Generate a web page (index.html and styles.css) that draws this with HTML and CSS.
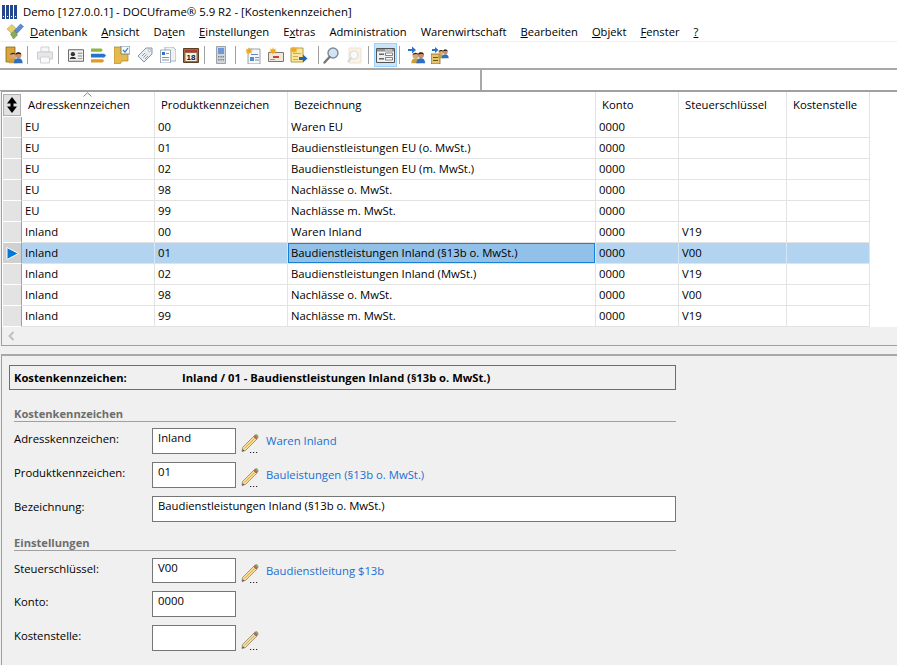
FILE: index.html
```html
<!DOCTYPE html>
<html lang="de">
<head>
<meta charset="utf-8">
<title>Demo - DOCUframe</title>
<link rel="stylesheet" href="styles.css">
</head>
<body>
<svg class="sprite" width="0" height="0" aria-hidden="true">
  <defs>
    <symbol id="pencil" viewBox="0 0 18 20">
      <path d="M1.500 14.500 L12.500 3.500 L15.500 6.500 L4.500 17.500 L1 18.500 Z" fill="#f3dc9a" stroke="#8c8570" stroke-width=".8"/>
      <path d="M3.500 15.500 L13.500 5.500" stroke="#d9a94a" stroke-width=".9"/>
      <path d="M12.500 3.500 L14.300 1.700 L17 4.500 L15.500 6.500 Z" fill="#b9675a" stroke="#8a7a6a" stroke-width=".5"/>
      <path d="M14.300 1.700 L15.500 1 L17.500 3 L17 4.500 Z" fill="#7aa860"/>
      <path d="M1.800 16 L1 18.500 L3.500 17.800 Z" fill="#555"/>
      <path d="M9 19h1.200v1H9zM12 19h1.200v1H12zM15 19h1.200v1H15z" fill="#222"/>
    </symbol>
    <symbol id="person" viewBox="0 0 18 18">
      <path d="M1 17 C1 12 4 11 6 11 C9 11 11 12 11 17 Z" fill="#c9a03c"/>
      <circle cx="6" cy="8" r="3.600" fill="#d9a679"/>
      <path d="M2.500 7 C3 3.500 9 3.500 9.500 7 L7 6 Z" fill="#3a2a1c"/>
      <path d="M7 17 C7 12.500 10 11 12.500 11 C15 11 17.500 12.500 17.500 17 Z" fill="#2f6fc0"/>
      <circle cx="12.500" cy="7.500" r="3.600" fill="#c98f68"/>
      <path d="M9 6.500 C9.500 3 15.500 3 16 6.500 L13 5.600 Z" fill="#2a1d14"/>
    </symbol>
    <symbol id="burst" viewBox="0 0 10 10">
      <path d="M5 0 L6 3 L9 1.500 L7.500 4 L10 5 L7.500 6 L9 8.500 L6 7 L5 10 L4 7 L1 8.500 L2.500 6 L0 5 L2.500 4 L1 1.500 L4 3 Z" fill="#f0a91e"/>
    </symbol>
  </defs>
</svg>

<header class="titlebar">
  <svg class="app-icon" width="16" height="14" viewBox="0 0 16 14">
    <path d="M0 0h3v14H0zM4 0h3v14H4zM8 0h3v14H8zM12 0h3v14h-3z" fill="#24468c"/>
    <path d="M1 11h1v1H1zM5 11h1v1H5zM9 11h1v1H9zM13 11h1v1h-1z" fill="#fff"/>
  </svg>
  <span>Demo [127.0.0.1] - DOCUframe® 5.9 R2 - [Kostenkennzeichen]</span>
</header>

<nav class="menubar">
  <svg class="menu-logo" width="17" height="17" viewBox="0 0 17 17">
    <path d="M0 6 L5 1.500 L9 5.500 L4 10 Z" fill="#e7cf6c" stroke="#a8913c" stroke-width=".5"/>
    <path d="M7 8 L13.500 1 L16.500 3.500 L10 10.500 Z" fill="#5a8ad8" stroke="#39639f" stroke-width=".5"/>
    <path d="M3.500 11 L8 7.500 L10.500 12 L6.500 16 Z" fill="#86ad55" stroke="#5f8138" stroke-width=".5"/>
  </svg>
  <span><u>D</u>atenbank</span><span><u>A</u>nsicht</span><span>Da<u>t</u>en</span><span><u>E</u>instellungen</span><span>E<u>x</u>tras</span><span>Administration</span><span>Warenwirtschaft</span><span><u>B</u>earbeiten</span><span><u>O</u>bjekt</span><span><u>F</u>enster</span><span><u>?</u></span>
</nav>

<div class="toolbar">
  <span class="tb"><svg width="18" height="18" viewBox="0 0 18 18"><path d="M1 1h9v15H1z" fill="#d8a63a" stroke="#8a6420" stroke-width=".8"/><use href="#person" x="3" y="3" width="15" height="15"/></svg></span>
  <i class="sep"></i>
  <span class="tb"><svg width="18" height="18" viewBox="0 0 18 18" opacity=".45"><path d="M5 1h8v5H5z" fill="#eee" stroke="#999"/><path d="M1.500 6h15v7h-15z" fill="#c8ccd2" stroke="#8b9098"/><path d="M4.500 11h9v6h-9z" fill="#f4f4f4" stroke="#999"/></svg></span>
  <i class="sep"></i>
  <span class="tb"><svg width="16" height="13" viewBox="0 0 18 14"><path d="M.500.500h17v13H.500z" fill="#f0f0f0" stroke="#555"/><circle cx="5.500" cy="5.500" r="2.400" fill="#333"/><path d="M2 11 C2 8 9 8 9 11 Z" fill="#333"/><path d="M11 4h5v1h-5zM11 7h5v1h-5zM11 10h5v1h-5z" fill="#888"/></svg></span>
  <span class="tb"><svg width="15" height="15" viewBox="0 0 16 15"><path d="M0 0h11l1.500 1.700L11 3.500H0z" fill="#8ab83a"/><path d="M0 5.500h14l2 2-2 2H0z" fill="#2673c8"/><path d="M0 11.500h12.500l1.500 1.700-1.500 1.800H0z" fill="#e0982a"/></svg></span>
  <span class="tb"><svg width="16" height="18" viewBox="0 0 16 18"><path d="M0 1h6l8 0v14H8l-2 3H0z" fill="#e6b94e" stroke="#ad8228" stroke-width=".7"/><path d="M7 0h9v8H7z" fill="#f5f8fc" stroke="#5a7290" stroke-width=".8"/><path d="M9 4l2 2 3-4" stroke="#2a7fd0" stroke-width="1.200" fill="none"/></svg></span>
  <span class="tb"><svg width="16" height="16" viewBox="0 0 16 16"><path d="M1 9 L9 1 L15 1 L15 7 L7 15 Z" fill="#e8edf2" stroke="#8b97a3"/><circle cx="12.500" cy="3.500" r="1.200" fill="#fff" stroke="#8b97a3" stroke-width=".6"/><path d="M5 9l3-3M6.500 10.500l3-3M8 12l3-3" stroke="#7a8691" stroke-width=".8"/></svg></span>
  <span class="tb"><svg width="16" height="16" viewBox="0 0 16 16"><path d="M5 0h8l3 3v11H5z" fill="#eef2f6" stroke="#98a4b0" stroke-width=".8"/><path d="M.500 3h10v13H.500z" fill="#fff" stroke="#8b97a3" stroke-width=".8"/><path d="M2 5h3v3H2z" fill="#3370c8"/><path d="M6 6h3v1H6zM2 10h7v1H2zM2 12.500h7v1H2z" fill="#7d96b8"/></svg></span>
  <span class="tb"><svg width="16" height="16" viewBox="0 0 16 16"><path d="M.500 1.500h15v14H.500z" fill="#9a6b45" stroke="#5e3d22"/><path d="M2 3h12v2H2z" fill="#b33a36"/><path d="M2.500 6h11v8h-11z" fill="#f6f1e6"/><text class="cal" x="8" y="13" text-anchor="middle">18</text></svg></span>
  <i class="sep"></i>
  <span class="tb"><svg class="nudge" width="10" height="18" viewBox="0 0 10 18" opacity=".8"><path d="M.500.500h9v17h-9z" fill="#c6ccd4" stroke="#848c96"/><path d="M2 2h6v6H2z" fill="#4a7fd0"/><path d="M2 10h1.500v1.500H2zM4.300 10h1.500v1.500H4.300zM6.500 10h1.500v1.500H6.500zM2 13h1.500v1.500H2zM4.300 13h1.500v1.500H4.300zM6.500 13h1.500v1.500H6.500z" fill="#666"/></svg></span>
  <i class="sep"></i>
  <span class="tb"><svg width="16" height="17" viewBox="0 0 16 17"><path d="M3 2h12v15H3z" fill="#f5f7fa" stroke="#7f8b97" stroke-width=".8"/><path d="M6 7h7v1H6zM5 10h4v4H5z" fill="#5b8ac4"/><path d="M10 10h4v1h-4zM10 12.500h4v1h-4z" fill="#7f8b97"/><use href="#burst" x="0" y="0" width="8" height="8"/></svg></span>
  <span class="tb"><svg width="16" height="16" viewBox="0 0 16 16"><path d="M.500 5.500h15v9h-15z" fill="#efe7dc" stroke="#7c776e"/><path d="M5 9h6v2H5z" fill="#c9413c"/><path d="M2 12h5v1H2z" fill="#9b9b9b"/><use href="#burst" x="1" y="0" width="8" height="8"/></svg></span>
  <span class="tb tb-end"><svg width="18" height="18" viewBox="0 0 18 18"><path d="M1 2h12v14H1z" fill="#f9e7a0" stroke="#b89a40"/><path d="M3 7h8v1H3zM3 10h5v1H3zM3 13h5v1H3z" fill="#c9ab55"/><use href="#burst" x="0" y="0" width="8" height="8"/><path d="M9 11h4V8.500l4.500 4-4.500 4V14H9z" fill="#2363b8"/></svg></span>
  <i class="sep sep-tight"></i>
  <span class="tb"><svg width="16" height="17" viewBox="0 0 16 17"><circle cx="10" cy="6" r="5" fill="#cfe4f8" stroke="#808a94" stroke-width="1.400"/><path d="M6.500 10 L1.500 15.500" stroke="#777" stroke-width="2.400" stroke-linecap="round"/></svg></span>
  <span class="tb"><svg width="16" height="17" viewBox="0 0 16 17" opacity=".35"><path d="M3 1h12v15H3z" fill="#f3dcae" stroke="#c9b48a"/><circle cx="8" cy="8" r="4" fill="#eef3f8" stroke="#999" stroke-width="1.200"/><path d="M5 11 L2 15" stroke="#888" stroke-width="2"/></svg></span>
  <i class="sep sep-wide"></i>
  <span class="tb tb-active"><svg width="19" height="15" viewBox="0 0 19 15"><path d="M.500.500h18v14H.500z" fill="#eef0f2" stroke="#555"/><path d="M1 1h17v2.500H1z" fill="#8d9298"/><path d="M9 1.500h7v1H9z" fill="#e8e8e8"/><path d="M3 5.500h5v1.500H3zM3 10h5v1.500H3z" fill="#666"/><path d="M9.500 5h7v2.500h-7zM9.500 9.500h7V12h-7z" fill="#fff" stroke="#555" stroke-width=".7"/></svg></span>
  <i class="sep"></i>
  <span class="tb"><svg width="18" height="18" viewBox="0 0 18 18"><use href="#person" x="2" y="3" width="16" height="15"/><path d="M0 3h4V.500L8 4 4 7.500V5H0z" fill="#2a6fc8"/></svg></span>
  <span class="tb"><svg width="18" height="18" viewBox="0 0 18 18"><path d="M0 8h9v10H0z" fill="#e6c56a" stroke="#6a5520" stroke-width=".7"/><path d="M2 11h5v1H2zM2 14h5v1H2z" fill="#6a5520"/><use href="#person" x="6" y="1" width="12" height="12"/><path d="M1 3h3V1l3.500 3L4 7V5H1z" fill="#2a6fc8"/></svg></span>
</div>

<div class="addressbar"><div class="address-left"></div><div class="address-right"></div></div>

<section class="gridwrap">
  <table class="grid">
    <colgroup><col class="c0"><col class="c1"><col class="c2"><col class="c3"><col class="c4"><col class="c5"><col class="c6"></colgroup>
    <thead>
      <tr>
        <th class="corner"><span class="corner-btn"><svg width="10" height="16" viewBox="0 0 10 16"><path d="M5 0 L10 6.500 H6.500 V9.500 H10 L5 16 L0 9.500 H3.500 V6.500 H0 Z" fill="#000"/></svg></span></th>
        <th class="sorted">Adresskennzeichen<svg class="sort" width="9" height="5" viewBox="0 0 9 5"><path d="M.5 4.500 L4.500 .8 L8.500 4.500" fill="none" stroke="#888"/></svg></th>
        <th>Produktkennzeichen</th><th>Bezeichnung</th><th>Konto</th><th>Steuerschlüssel</th><th>Kostenstelle</th>
      </tr>
    </thead>
    <tbody>
      <tr><td class="rh"></td><td>EU</td><td>00</td><td>Waren EU</td><td>0000</td><td></td><td></td></tr>
      <tr><td class="rh"></td><td>EU</td><td>01</td><td>Baudienstleistungen EU (o. MwSt.)</td><td>0000</td><td></td><td></td></tr>
      <tr><td class="rh"></td><td>EU</td><td>02</td><td>Baudienstleistungen EU (m. MwSt.)</td><td>0000</td><td></td><td></td></tr>
      <tr><td class="rh"></td><td>EU</td><td>98</td><td>Nachlässe o. MwSt.</td><td>0000</td><td></td><td></td></tr>
      <tr><td class="rh"></td><td>EU</td><td>99</td><td>Nachlässe m. MwSt.</td><td>0000</td><td></td><td></td></tr>
      <tr><td class="rh"></td><td>Inland</td><td>00</td><td>Waren Inland</td><td>0000</td><td>V19</td><td></td></tr>
      <tr class="selected"><td class="rh"><svg class="arrow" width="13" height="13" viewBox="0 0 13 13"><path d="M1 .5 L12.500 6.500 L1 12.500 Z" fill="#0078d7" stroke="#fff"/></svg></td><td>Inland</td><td>01</td><td class="current">Baudienstleistungen Inland (§13b o. MwSt.)</td><td>0000</td><td>V00</td><td></td></tr>
      <tr><td class="rh"></td><td>Inland</td><td>02</td><td>Baudienstleistungen Inland (MwSt.)</td><td>0000</td><td>V19</td><td></td></tr>
      <tr><td class="rh"></td><td>Inland</td><td>98</td><td>Nachlässe o. MwSt.</td><td>0000</td><td>V00</td><td></td></tr>
      <tr><td class="rh"></td><td>Inland</td><td>99</td><td>Nachlässe m. MwSt.</td><td>0000</td><td>V19</td><td></td></tr>
    </tbody>
  </table>
  <div class="hscroll"><svg width="7" height="10" viewBox="0 0 7 10"><path d="M5.500 1 L1.500 5 L5.500 9" fill="none" stroke="#bdbdbd" stroke-width="1.800"/></svg></div>
</section>

<main class="panel">
  <div class="record-title"><span class="record-label">Kostenkennzeichen:</span><span>Inland / 01 - Baudienstleistungen Inland (§13b o. MwSt.)</span></div>

  <h2 class="section-head">Kostenkennzeichen</h2>
  <div class="form-row"><label>Adresskennzeichen:</label><div class="field">Inland</div><svg class="pencil"><use href="#pencil"/></svg><a class="link">Waren Inland</a></div>
  <div class="form-row"><label>Produktkennzeichen:</label><div class="field">01</div><svg class="pencil"><use href="#pencil"/></svg><a class="link">Bauleistungen (§13b o. MwSt.)</a></div>
  <div class="form-row"><label>Bezeichnung:</label><div class="field field-wide">Baudienstleistungen Inland (§13b o. MwSt.)</div></div>

  <h2 class="section-head section-next">Einstellungen</h2>
  <div class="form-row form-row-short"><label>Steuerschlüssel:</label><div class="field">V00</div><svg class="pencil"><use href="#pencil"/></svg><a class="link">Baudienstleitung $13b</a></div>
  <div class="form-row"><label>Konto:</label><div class="field">0000</div></div>
  <div class="form-row"><label>Kostenstelle:</label><div class="field"></div><svg class="pencil"><use href="#pencil"/></svg></div>
</main>
</body>
</html>
```
FILE: styles.css
```css
* { box-sizing: border-box; }
html, body { margin: 0; padding: 0; height: 100%; }
body {
  width: 897px; height: 665px; overflow: hidden; background: #f0f0f0; color: #000;
  font-family: "Open Sans", "Noto Sans", sans-serif; font-size: 11.3px; line-height: 16px;
}
.sprite { position: absolute; }

.titlebar { height: 22px; display: flex; align-items: center; padding: 1px 0 0 2px; gap: 5px; background: #fff; font-size: 11.35px; }
.menubar { height: 20px; display: flex; align-items: center; gap: 14px; padding-left: 7px; border-bottom: 1px solid #f0f0f0; background: #fff; font-size: 11.2px; }
.menu-logo { margin-right: -8px; }

.toolbar { height: 26px; display: flex; align-items: center; padding-left: 2px; background: #fff; }
.tb { width: 23px; height: 24px; flex: none; display: flex; align-items: center; justify-content: center; }
.tb-end { margin-right: 6px; }
.tb-active { background: #cce4f7; border: 1px solid #99d1ff; }
.nudge { transform: translateX(-1px); }
.cal { font: bold 8px "Liberation Sans", sans-serif; fill: #111; }
.sep { width: 1px; height: 18px; background: #a0a0a0; margin: 0 5px 0 2px; flex: none; }
.sep-tight { margin-right: 0; }
.sep-wide { margin-left: 3px; }

.addressbar { height: 23px; display: flex; border-top: 2px solid #a8a8a8; border-bottom: 1px solid #a0a0a0; background: #fff; }
.address-left { width: 482px; border-right: 2px solid #a8a8a8; }
.address-right { flex: 1; }

.gridwrap { height: 255px; margin-left: 1px; background: #fff; border-left: 1px solid #a0a0a0; border-bottom: 1px solid #a0a0a0; border-top: 1px solid #a0a0a0; }
.grid { table-layout: fixed; border-collapse: separate; border-spacing: 0; width: 868px; }
.c0 { width: 20px; } .c1 { width: 133px; } .c2 { width: 133px; } .c3 { width: 308px; }
.c4 { width: 83px; } .c5 { width: 108px; } .c6 { width: 83px; }
th { height: 25px; padding: 1px 0 0 6px; font-weight: 400; text-align: left; border-right: 1px solid #e3e3e3; white-space: nowrap; }
th.sorted { position: relative; }
.sort { position: absolute; left: 61px; top: 0; }
th.corner { padding: 2px 0 1px 1px; border-right: none; }
.corner-btn { width: 18px; height: 22px; display: flex; align-items: center; justify-content: center; background: #e1e1e1; border: 1px solid #adadad; }
td { height: 21px; padding: 0 0 0 3px; border-right: 1px solid #e3e3e3; border-bottom: 1px solid #e3e3e3; white-space: nowrap; overflow: hidden; }
td.rh { padding: 0; background: #e3e3e3; border-left: 1px solid #fff; border-right: 1px solid #a0a0a0; border-bottom: 1px solid #fff; }
.selected td { background: #b2d4f0; border-right-color: #d5e6f5; }
.selected td.rh { background: #d0d0d0; border-right-color: #a0a0a0; }
.arrow { display: block; margin-left: 3px; }
.selected td.current { background: #91c1e8; box-shadow: inset 0 0 0 1px #1a80d6; }
.hscroll { height: 18px; background: #f0f0f0; display: flex; align-items: center; padding-left: 6px; }

.panel { height: 311px; margin: 8px 0 0 1px; border-top: 2px solid #a8a8a8; border-left: 1px solid #a0a0a0; background: #f0f0f0; padding: 9px 0 0 7px; }

.record-title { width: 667px; height: 25px; border: 1px solid #6d6d6d; display: flex; align-items: center; padding-left: 4px; font-weight: 700; font-size: 11.2px; }
.record-label { width: 168px; }
.section-head { width: 662px; height: 16px; margin: 16px 0 0 5px; padding-top: 1px; font-size: 11.15px; line-height: 14px; font-weight: 700; color: #6d6d6d; border-bottom: 1px solid #a0a0a0; }
.section-next { margin-top: 13px; }
.section-head + .form-row { margin-top: 6px; }
.section-next + .form-row { margin-top: 7px; }
.form-row { display: flex; align-items: flex-start; height: 26px; margin: 8px 0 0 5px; }
.form-row-short { height: 25px; }
.form-row-short .field { height: 25px; }
.form-row label { width: 138px; padding-top: 3px; }
.field { width: 84px; height: 26px; background: #fff; border: 1px solid #767676; padding: 1px 0 0 5px; flex: none; }
.field-wide { width: 524px; }
.pencil { width: 18px; height: 20px; margin: 5px 0 0 5px; flex: none; }
.link { color: #1a6fd0; margin: 5px 0 0 7px; }
```
